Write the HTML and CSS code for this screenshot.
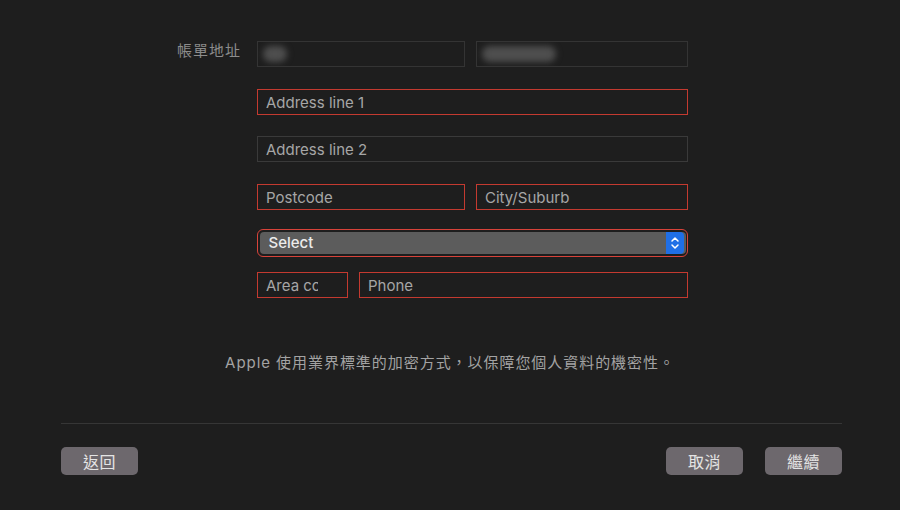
FILE: index.html
```html
<!DOCTYPE html>
<html lang="zh-Hant">
<head>
<meta charset="utf-8">
<title>帳單地址</title>
<link rel="stylesheet" href="styles.css">
</head>
<body>
<div class="page">
  <div class="form">
    <div class="label">帳單地址</div>
    <div class="fields">
      <div class="row row-name pair">
        <div class="field dim blurred"><span class="blob blob-s"></span></div>
        <div class="field dim blurred"><span class="blob blob-l"></span></div>
      </div>
      <div class="row row-a1">
        <input class="field err" type="text" placeholder="Address line 1">
      </div>
      <div class="row row-a2">
        <input class="field" type="text" placeholder="Address line 2">
      </div>
      <div class="row row-pc pair">
        <input class="field err" type="text" placeholder="Postcode">
        <input class="field err" type="text" placeholder="City/Suburb">
      </div>
      <div class="row row-sel">
        <div class="select-ring">
          <div class="select">
            <span class="select-text">Select</span>
            <span class="stepper">
              <svg width="10" height="16" viewBox="0 0 10 16" fill="none" stroke="#ffffff" stroke-width="1.5" stroke-linecap="round" stroke-linejoin="round">
                <path d="M2 6 L5 3 L8 6"/>
                <path d="M2 10 L5 13 L8 10"/>
              </svg>
            </span>
          </div>
        </div>
      </div>
      <div class="row row-ph phone">
        <input class="field err area" type="text" placeholder="Area code">
        <input class="field err" type="text" placeholder="Phone">
      </div>
    </div>
  </div>
  <p class="note">Apple 使用業界標準的加密方式，以保障您個人資料的機密性。</p>
  <div class="footer">
    <button class="btn">返回</button>
    <div class="right">
      <button class="btn">取消</button>
      <button class="btn">繼續</button>
    </div>
  </div>
</div>
</body>
</html>
```
FILE: styles.css
```css
html, body {
  margin: 0;
  padding: 0;
  background: #1e1e1e;
}
body {
  width: 900px;
  height: 510px;
  overflow: hidden;
  font-family: Inter, "Noto Sans CJK TC", sans-serif;
}
.page {
  padding-top: 41px;
}
.form {
  display: grid;
  grid-template-columns: 65px 431px;
  column-gap: 16px;
  padding-left: 176px;
}
.label {
  font-family: "Noto Sans CJK TC", sans-serif;
  font-size: 15px;
  letter-spacing: 1px;
  color: #8c8c8c;
  line-height: 18px;
  text-align: right;
  white-space: nowrap;
}
.fields {
  display: flex;
  flex-direction: column;
}
.row { display: flex; }
.row-a1 { margin-top: 22px; }
.row-a2 { margin-top: 21px; }
.row-pc { margin-top: 22px; }
.row-sel { margin-top: 19px; }
.row-ph { margin-top: 15px; }

.pair {
  display: grid;
  grid-template-columns: 208px 212px;
  column-gap: 11px;
}
.phone {
  display: grid;
  grid-template-columns: 91px 329px;
  column-gap: 11px;
}
.field {
  box-sizing: border-box;
  width: 100%;
  height: 26px;
  margin: 0;
  border: 1px solid #3a3a3a;
  border-radius: 0;
  background: #1e1e1e;
  color: #a8a8a8;
  font-family: Inter, "Noto Sans CJK TC", sans-serif;
  font-size: 15px;
  padding: 0 8px;
  outline: none;
}
.field::placeholder {
  color: #a6a6a6;
  opacity: 1;
}
.field.err {
  border-color: #c43a30;
}
.field.dim {
  border-color: #343434;
}
.field.area {
  padding-right: 29px;
}
.blurred {
  display: flex;
  align-items: center;
  padding-left: 5px;
  overflow: hidden;
}
.blob {
  display: block;
  height: 16px;
  border-radius: 8px;
  background: #4e4e4e;
  filter: blur(3px);
}
.blob-s { width: 24px; }
.blob-l { width: 74px; }

.select-ring {
  box-sizing: border-box;
  width: 431px;
  height: 28px;
  border: 1.5px solid #d8433a;
  border-radius: 6px;
  padding: 1.5px;
}
.select {
  display: flex;
  align-items: center;
  height: 22px;
  border-radius: 4px;
  background: #5c5c5c;
  overflow: hidden;
}
.select-text {
  flex: 1;
  padding-left: 9px;
  font-size: 15px;
  font-weight: 500;
  color: #ececec;
  line-height: 22px;
}
.stepper {
  width: 18px;
  height: 22px;
  margin-right: 2px;
  background: #1f6fe6;
  border-radius: 0 4px 4px 0;
  display: flex;
  align-items: center;
  justify-content: center;
}
.stepper svg { display: block; }

.note {
  margin: 0;
  margin-top: 56px;
  text-align: center;
  font-size: 15px;
  letter-spacing: 0.95px;
  line-height: 18px;
  color: #a3a3a3;
}
.footer {
  margin: 51px 58px 0 61px;
  border-top: 1px solid #363636;
  padding-top: 23px;
  display: flex;
  justify-content: space-between;
}
.right {
  display: flex;
  gap: 22px;
}
.btn {
  width: 77px;
  height: 28px;
  border: none;
  border-radius: 5px;
  background: #6d686d;
  color: #e4e4e4;
  font-family: "Noto Sans CJK TC", sans-serif;
  font-size: 16px;
  line-height: 28px;
  padding: 0;
  letter-spacing: 0.5px;
}
```
